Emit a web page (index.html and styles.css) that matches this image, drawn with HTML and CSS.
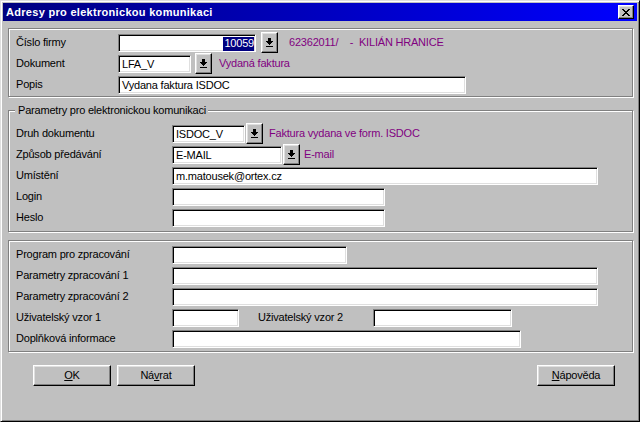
FILE: index.html
```html
<!DOCTYPE html>
<html lang="cs">
<head>
<meta charset="utf-8">
<title>Adresy pro elektronickou komunikaci</title>
<link rel="stylesheet" href="styles.css">
</head>
<body>
<div class="window">
  <div class="titlebar">
    <span class="title">Adresy pro elektronickou komunikaci</span>
    <span class="close-btn"><svg class="xicon" width="8" height="7" viewBox="0 0 8 7"><path d="M0 0h2v1H0zM6 0h2v1H6zM1 1h2v1H1zM5 1h2v1H5zM2 2h4v1H2zM3 3h2v1H3zM2 4h4v1H2zM1 5h2v1H1zM5 5h2v1H5zM0 6h2v1H0zM6 6h2v1H6z" fill="#000"/></svg></span>
  </div>
  <div class="client">
    <div class="group g1">
      <div class="row">
        <span class="lbl lw1">Číslo firmy</span>
        <span class="edit e-firma"><span class="seltext">10059</span></span>
        <span class="drop d-firma"><svg width="7" height="9" viewBox="0 0 7 9"><path d="M2 0h3v3H2zM0 3h7v1H0zM1 4h5v1H1zM2 5h3v1H2zM3 6h1v1H3zM0 8h7v1H0z" fill="#000"/></svg></span>
        <span class="info i-firma">62362011/&nbsp;&nbsp;&nbsp; -&nbsp; KILIÁN HRANICE</span>
      </div>
      <div class="row">
        <span class="lbl lw1">Dokument</span>
        <span class="edit e-dok">LFA_V</span>
        <span class="drop d-dok"><svg width="7" height="9" viewBox="0 0 7 9"><path d="M2 0h3v3H2zM0 3h7v1H0zM1 4h5v1H1zM2 5h3v1H2zM3 6h1v1H3zM0 8h7v1H0z" fill="#000"/></svg></span>
        <span class="info i-dok">Vydaná faktura</span>
      </div>
      <div class="row">
        <span class="lbl lw1">Popis</span>
        <span class="edit e-popis">Vydana faktura ISDOC</span>
      </div>
    </div>

    <div class="group g2">
      <span class="legend">Parametry pro elektronickou komunikaci</span>
      <div class="row">
        <span class="lbl lw2">Druh dokumentu</span>
        <span class="edit e-druh">ISDOC_V</span>
        <span class="drop d-near"><svg width="7" height="9" viewBox="0 0 7 9"><path d="M2 0h3v3H2zM0 3h7v1H0zM1 4h5v1H1zM2 5h3v1H2zM3 6h1v1H3zM0 8h7v1H0z" fill="#000"/></svg></span>
        <span class="info i-druh">Faktura vydana ve form. ISDOC</span>
      </div>
      <div class="row">
        <span class="lbl lw2">Způsob předávání</span>
        <span class="edit e-zpusob">E-MAIL</span>
        <span class="drop d-near"><svg width="7" height="9" viewBox="0 0 7 9"><path d="M2 0h3v3H2zM0 3h7v1H0zM1 4h5v1H1zM2 5h3v1H2zM3 6h1v1H3zM0 8h7v1H0z" fill="#000"/></svg></span>
        <span class="info i-zpusob">E-mail</span>
      </div>
      <div class="row">
        <span class="lbl lw2">Umístění</span>
        <span class="edit e-long">m.matousek@ortex.cz</span>
      </div>
      <div class="row">
        <span class="lbl lw2">Login</span>
        <span class="edit e-mid"></span>
      </div>
      <div class="row">
        <span class="lbl lw2">Heslo</span>
        <span class="edit e-mid"></span>
      </div>
    </div>

    <div class="group g3">
      <div class="row">
        <span class="lbl lw2">Program pro zpracování</span>
        <span class="edit e-prog"></span>
      </div>
      <div class="row">
        <span class="lbl lw2">Parametry zpracování 1</span>
        <span class="edit e-long"></span>
      </div>
      <div class="row">
        <span class="lbl lw2">Parametry zpracování 2</span>
        <span class="edit e-long"></span>
      </div>
      <div class="row">
        <span class="lbl lw2">Uživatelský vzor 1</span>
        <span class="edit e-vzor1"></span>
        <span class="lbl lbl-vzor2">Uživatelský vzor 2</span>
        <span class="edit e-vzor2"></span>
      </div>
      <div class="row">
        <span class="lbl lw2">Doplňková informace</span>
        <span class="edit e-dopl"></span>
      </div>
    </div>

    <div class="buttons">
      <div class="btn-group">
        <span class="btn"><u>O</u>K</span>
        <span class="btn">Ná<u>v</u>rat</span>
      </div>
      <span class="btn"><u>N</u>ápověda</span>
    </div>
  </div>
</div>
</body>
</html>
```

FILE: styles.css
```css
* { box-sizing: border-box; }

html, body {
  margin: 0;
  padding: 0;
  background: #c0c0c0;
}

body {
  font-family: "Liberation Sans", Arial, sans-serif;
  font-size: 11px;
  letter-spacing: -0.2px;
  color: #000;
}

.window {
  width: 640px;
  height: 422px;
  background: #c0c0c0;
  border: 1px solid;
  border-color: #dfdfdf #000 #000 #dfdfdf;
  box-shadow: inset 1px 1px #fff, inset -1px -1px #808080;
  padding: 2px;
  display: flex;
  flex-direction: column;
}

.titlebar {
  flex: none;
  height: 18px;
  background: linear-gradient(to right, #000080, #0000ff);
  display: flex;
  align-items: center;
  justify-content: space-between;
  padding: 0 3px 0 3px;
}

.title {
  color: #fff;
  font-weight: bold;
  letter-spacing: 0.3px;
  line-height: 13px;
  white-space: nowrap;
}

.close-btn {
  width: 16px;
  height: 14px;
  background: #c0c0c0;
  border: 1px solid;
  border-color: #fff #000 #000 #fff;
  box-shadow: inset -1px -1px #808080, inset 1px 1px #dfdfdf;
  display: flex;
  align-items: center;
  justify-content: center;
}

.xicon { display: block; margin-left: -1px; }

.client {
  padding: 7px 4px 0 5px;
}

.group {
  position: relative;
  border: 1px solid #808080;
  box-shadow: inset 1px 1px #fff, 1px 1px #fff;
}

.g1 { padding: 3px 0 1px 7px; }
.g2 { margin-top: 13px; padding: 12px 0 3px 7px; }
.g3 { margin-top: 8px; padding: 3px 0 2px 7px; }

.legend {
  position: absolute;
  top: -7px;
  left: 6px;
  padding: 0 2px 0 3px;
  background: #c0c0c0;
  line-height: 13px;
  white-space: nowrap;
}

.row {
  height: 21px;
  display: flex;
  align-items: center;
}

.lbl {
  flex: none;
  line-height: 13px;
  white-space: nowrap;
}
.lw1 { width: 102px; }
.lw2 { width: 156px; }
.lbl-vzor2 { width: 115px; margin-left: 19px; }

.edit {
  flex: none;
  height: 18px;
  background: #fff;
  border: 1px solid;
  border-color: #808080 #fff #fff #808080;
  box-shadow: inset 1px 1px #000, inset -1px -1px #dfdfdf;
  padding: 2px 2px 0 3px;
  line-height: 13px;
  white-space: nowrap;
  overflow: hidden;
}

.e-firma { width: 138px; display: flex; justify-content: flex-end; padding-right: 1px; }
.seltext { background: #000080; color: #fff; line-height: 13px; padding-left: 1px; }
.e-dok { width: 73px; }
.e-popis { width: 348px; }
.e-druh { width: 73px; }
.e-zpusob { width: 110px; }
.e-long { width: 426px; }
.e-mid { width: 213px; }
.e-prog { width: 175px; }
.e-vzor1 { width: 67px; }
.e-vzor2 { width: 139px; }
.e-dopl { width: 349px; }

.drop {
  flex: none;
  width: 17px;
  height: 21px;
  background: #c0c0c0;
  border: 1px solid;
  border-color: #fff #000 #000 #fff;
  box-shadow: inset -1px -1px #808080, inset 1px 1px #dfdfdf;
  display: flex;
  align-items: center;
  justify-content: center;
}
.drop svg { display: block; }
.d-firma { margin-left: 5px; }
.d-dok { margin-left: 4px; }
.d-near { margin-left: 1px; }

.info {
  color: #800080;
  line-height: 13px;
  white-space: pre;
}
.i-firma { margin-left: 11px; }
.i-dok { margin-left: 7px; }
.i-druh { margin-left: 6px; }
.i-zpusob { margin-left: 4px; }

.buttons {
  margin-top: 13px;
  padding: 0 18px 0 25px;
  display: flex;
  justify-content: space-between;
}

.btn-group {
  display: flex;
  gap: 6px;
}

.btn {
  width: 78px;
  height: 21px;
  background: #c0c0c0;
  border: 1px solid;
  border-color: #fff #000 #000 #fff;
  box-shadow: inset -1px -1px #808080, inset 1px 1px #dfdfdf;
  display: flex;
  align-items: center;
  justify-content: center;
  line-height: 13px;
}
```
